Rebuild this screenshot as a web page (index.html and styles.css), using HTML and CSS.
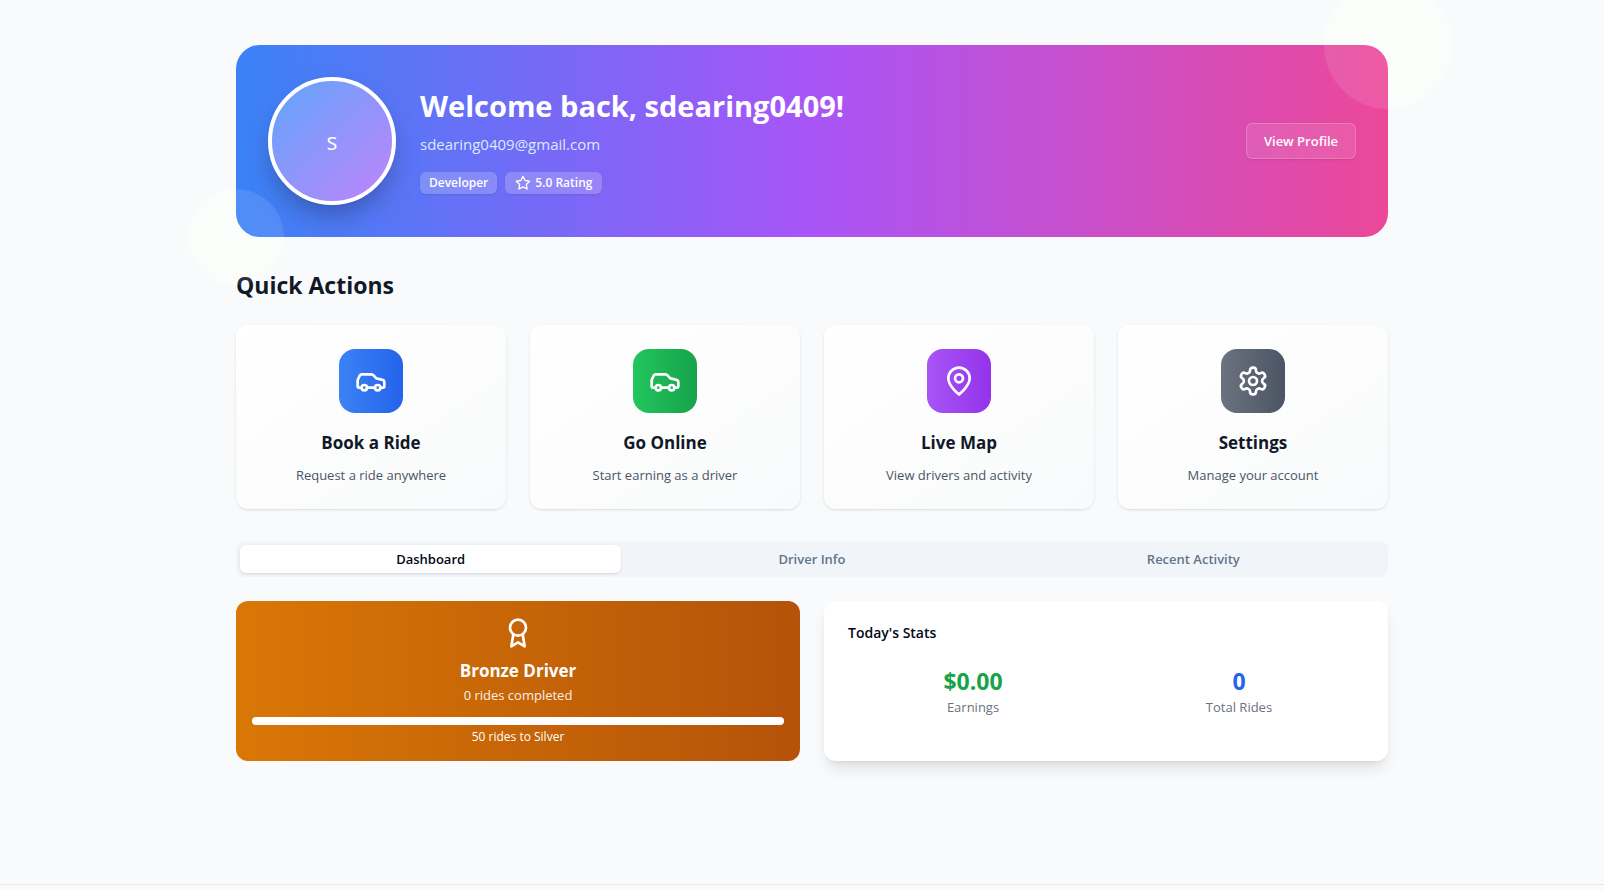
FILE: index.html
```html
<!DOCTYPE html>
<html lang="en">
<head>
<meta charset="utf-8">
<meta name="viewport" content="width=device-width, initial-scale=1">
<title>Dashboard</title>
<link rel="stylesheet" href="styles.css">
</head>
<body>
<div class="shell">
<main class="page">
  <header class="hero">
    <div class="avatar">s</div>
    <div class="hero-text">
      <h1 class="hero-title">Welcome back, sdearing0409!</h1>
      <p class="hero-email">sdearing0409@gmail.com</p>
      <div class="badges">
        <span class="badge">Developer</span>
        <span class="badge badge-rating">
          <svg class="icon star" viewBox="0 0 24 24" aria-hidden="true"><polygon points="12 2 15.09 8.26 22 9.27 17 14.14 18.18 21.02 12 17.77 5.82 21.02 7 14.14 2 9.27 8.91 8.26 12 2"/></svg>
          5.0 Rating
        </span>
      </div>
    </div>
    <button class="profile-button" type="button">View Profile</button>
    <span class="bubble bubble-top"></span>
    <span class="bubble bubble-bottom"></span>
  </header>

  <section class="actions">
    <h2 class="section-title">Quick Actions</h2>
    <div class="action-grid">
      <a class="action" href="#book">
        <span class="tile blue"><svg class="icon" viewBox="0 0 24 24" aria-hidden="true"><path d="M19 17h2c.6 0 1-.4 1-1v-3c0-.9-.7-1.7-1.5-1.9C18.7 10.6 16 10 16 10s-1.3-1.4-2.2-2.3c-.5-.4-1.1-.7-1.8-.7H5c-.6 0-1.1.4-1.4.9l-1.4 2.9A3.7 3.7 0 0 0 2 12v4c0 .6.4 1 1 1h2"/><circle cx="7" cy="17" r="2"/><path d="M9 17h6"/><circle cx="17" cy="17" r="2"/></svg></span>
        <h3 class="action-title">Book a Ride</h3>
        <p class="action-text">Request a ride anywhere</p>
      </a>
      <a class="action" href="#online">
        <span class="tile green"><svg class="icon" viewBox="0 0 24 24" aria-hidden="true"><path d="M19 17h2c.6 0 1-.4 1-1v-3c0-.9-.7-1.7-1.5-1.9C18.7 10.6 16 10 16 10s-1.3-1.4-2.2-2.3c-.5-.4-1.1-.7-1.8-.7H5c-.6 0-1.1.4-1.4.9l-1.4 2.9A3.7 3.7 0 0 0 2 12v4c0 .6.4 1 1 1h2"/><circle cx="7" cy="17" r="2"/><path d="M9 17h6"/><circle cx="17" cy="17" r="2"/></svg></span>
        <h3 class="action-title">Go Online</h3>
        <p class="action-text">Start earning as a driver</p>
      </a>
      <a class="action" href="#map">
        <span class="tile purple"><svg class="icon" viewBox="0 0 24 24" aria-hidden="true"><path d="M20 10c0 6-8 12-8 12s-8-6-8-12a8 8 0 0 1 16 0Z"/><circle cx="12" cy="10" r="3"/></svg></span>
        <h3 class="action-title">Live Map</h3>
        <p class="action-text">View drivers and activity</p>
      </a>
      <a class="action" href="#settings">
        <span class="tile gray"><svg class="icon" viewBox="0 0 24 24" aria-hidden="true"><path d="M12.22 2h-.44a2 2 0 0 0-2 2v.18a2 2 0 0 1-1 1.73l-.43.25a2 2 0 0 1-2 0l-.15-.08a2 2 0 0 0-2.73.73l-.22.38a2 2 0 0 0 .73 2.73l.15.1a2 2 0 0 1 1 1.72v.51a2 2 0 0 1-1 1.74l-.15.09a2 2 0 0 0-.73 2.73l.22.38a2 2 0 0 0 2.73.73l.15-.08a2 2 0 0 1 2 0l.43.25a2 2 0 0 1 1 1.73V20a2 2 0 0 0 2 2h.44a2 2 0 0 0 2-2v-.18a2 2 0 0 1 1-1.73l.43-.25a2 2 0 0 1 2 0l.15.08a2 2 0 0 0 2.73-.73l.22-.39a2 2 0 0 0-.73-2.73l-.15-.08a2 2 0 0 1-1-1.74v-.5a2 2 0 0 1 1-1.74l.15-.09a2 2 0 0 0 .73-2.73l-.22-.38a2 2 0 0 0-2.73-.73l-.15.08a2 2 0 0 1-2 0l-.43-.25a2 2 0 0 1-1-1.73V4a2 2 0 0 0-2-2z"/><circle cx="12" cy="12" r="3"/></svg></span>
        <h3 class="action-title">Settings</h3>
        <p class="action-text">Manage your account</p>
      </a>
    </div>
  </section>

  <div class="tabs" role="tablist">
    <button class="tab active" type="button" role="tab" aria-selected="true">Dashboard</button>
    <button class="tab" type="button" role="tab" aria-selected="false">Driver Info</button>
    <button class="tab" type="button" role="tab" aria-selected="false">Recent Activity</button>
  </div>

  <div class="panels">
    <section class="tier">
      <svg class="icon" viewBox="0 0 24 24" aria-hidden="true"><circle cx="12" cy="8" r="6"/><path d="M15.477 12.89 17 22l-5-3-5 3 1.523-9.11"/></svg>
      <h3 class="tier-title">Bronze Driver</h3>
      <p class="tier-rides">0 rides completed</p>
      <div class="progress" role="progressbar" aria-label="Rides to Silver" aria-valuenow="0" aria-valuemin="0" aria-valuemax="50"></div>
      <p class="tier-next">50 rides to Silver</p>
    </section>
    <section class="stats">
      <h3 class="stats-title">Today's Stats</h3>
      <dl class="stats-grid">
        <div class="stat"><dt class="stat-label">Earnings</dt><dd class="stat-value earned">$0.00</dd></div>
        <div class="stat"><dt class="stat-label">Total Rides</dt><dd class="stat-value rides">0</dd></div>
      </dl>
    </section>
  </div>
</main>
</div>
<footer class="footer"></footer>
</body>
</html>
```
FILE: styles.css
```css
* {
  box-sizing: border-box;
  margin: 0;
}

body {
  display: flex;
  flex-direction: column;
  min-height: 100vh;
  overflow-x: hidden;
  background: #f9fafc;
  color: #020817;
  font-family: "Open Sans", "Noto Sans", sans-serif;
  font-size: 15px;
  line-height: 24px;
}

button {
  font: inherit;
  cursor: pointer;
}

.icon {
  width: 32px;
  height: 32px;
  fill: none;
  stroke: currentColor;
  stroke-width: 2;
  stroke-linecap: round;
  stroke-linejoin: round;
}

.shell {
  flex: 1;
  padding: 45px 32px 32px 52px;
}

.page {
  display: flex;
  flex-direction: column;
  gap: 32px;
  max-width: 1152px;
  margin: 0 auto;
}

/* Welcome banner */
.hero {
  position: relative;
  display: flex;
  align-items: center;
  gap: 24px;
  padding: 32px;
  border-radius: 24px;
  background: linear-gradient(to right, #3b82f6, #a855f7, #ec4899);
  color: #fff;
}

.avatar {
  display: flex;
  flex: none;
  align-items: center;
  justify-content: center;
  width: 128px;
  height: 128px;
  border: 4px solid #fff;
  border-radius: 50%;
  background: linear-gradient(to bottom right, #60a5fa, #c084fc);
  box-shadow: 0 14px 30px -8px rgb(0 0 0 / 0.35);
  font-size: 23px;
  font-weight: 500;
  line-height: 32px;
}

.hero-text {
  flex: 1;
}

.hero-title {
  margin-bottom: 8px;
  font-size: 29px;
  font-weight: 700;
  line-height: 36px;
}

.hero-email {
  margin-bottom: 16px;
  color: #dbeafe;
}

.badges {
  display: flex;
  gap: 8px;
}

.badge {
  display: flex;
  align-items: center;
  gap: 4px;
  padding: 3px 9px;
  border-radius: 6px;
  background: rgb(255 255 255 / 0.2);
  box-shadow: 0 1px 2px rgb(0 0 0 / 0.1);
  font-size: 12px;
  font-weight: 600;
  line-height: 16px;
}

.badge-rating {
  padding: 3px 10px;
}

.star {
  width: 16px;
  height: 16px;
}

.profile-button {
  min-width: 110px;
  height: 36px;
  padding: 0 16px;
  border: 1px solid rgb(255 255 255 / 0.2);
  border-radius: 6px;
  background: rgb(255 255 255 / 0.1);
  box-shadow: 0 1px 2px rgb(0 0 0 / 0.1);
  color: #fff;
  font-size: 13px;
  font-weight: 600;
}

.bubble {
  position: absolute;
  border-radius: 50%;
  background: rgb(255 255 255 / 0.1);
  pointer-events: none;
}

/* Soft disc on the page background, behind the banner */
.bubble::before {
  content: "";
  position: absolute;
  inset: 0;
  z-index: -1;
  border-radius: 50%;
  background: #fbfdfb;
}

.bubble-top {
  top: -64px;
  right: -64px;
  width: 128px;
  height: 128px;
}

.bubble-bottom {
  bottom: -48px;
  left: -48px;
  width: 96px;
  height: 96px;
}

/* Quick actions */
.section-title {
  margin-bottom: 24px;
  color: #111827;
  font-size: 23px;
  font-weight: 700;
  line-height: 32px;
}

.action-grid {
  display: grid;
  grid-template-columns: repeat(4, 1fr);
  gap: 24px;
}

.action {
  display: flex;
  flex-direction: column;
  align-items: center;
  padding: 24px;
  border-radius: 12px;
  background: linear-gradient(to bottom right, #fff, #f9fafb);
  box-shadow: 0 1px 3px rgb(0 0 0 / 0.1), 0 1px 2px -1px rgb(0 0 0 / 0.1);
  color: #111827;
  text-align: center;
  text-decoration: none;
}

.tile {
  display: flex;
  align-items: center;
  justify-content: center;
  width: 64px;
  height: 64px;
  margin-bottom: 16px;
  border-radius: 16px;
  color: #fff;
}

.blue {
  background: linear-gradient(to right, #3b82f6, #2563eb);
}

.green {
  background: linear-gradient(to right, #22c55e, #16a34a);
}

.purple {
  background: linear-gradient(to right, #a855f7, #9333ea);
}

.gray {
  background: linear-gradient(to right, #6b7280, #4b5563);
}

.action-title {
  margin-bottom: 8px;
  font-size: 17px;
  font-weight: 700;
  line-height: 28px;
}

.action-text {
  color: #4b5563;
  font-size: 13px;
  line-height: 20px;
}

/* Tabs */
.tabs {
  display: grid;
  grid-template-columns: repeat(3, 1fr);
  padding: 4px;
  border-radius: 8px;
  background: #f1f5f9;
}

.tab {
  padding: 4px 12px;
  border: 0;
  border-radius: 6px;
  background: none;
  color: #64748b;
  font-size: 13px;
  font-weight: 600;
  line-height: 20px;
}

.active {
  background: #fff;
  box-shadow: 0 1px 3px rgb(0 0 0 / 0.1), 0 1px 2px -1px rgb(0 0 0 / 0.1);
  color: #020817;
}

/* Dashboard panels */
.panels {
  display: grid;
  grid-template-columns: repeat(2, 1fr);
  gap: 24px;
  margin-top: -8px;
}

.tier {
  display: flex;
  flex-direction: column;
  align-items: center;
  padding: 16px;
  border-radius: 12px;
  background: linear-gradient(to right, #d97706, #b45309);
  color: #fff;
}

.tier-title {
  margin-top: 8px;
  font-size: 17px;
  font-weight: 700;
  line-height: 28px;
}

.tier-rides {
  font-size: 13px;
  font-weight: 500;
  line-height: 20px;
  opacity: 0.9;
}

.progress {
  width: 100%;
  height: 8px;
  margin: 12px 0 4px;
  border-radius: 4px;
  background: #fff;
}

.tier-next {
  font-size: 12px;
  line-height: 16px;
}

.stats {
  padding: 24px;
  border-radius: 12px;
  background: #fff;
  box-shadow: 0 10px 15px -3px rgb(0 0 0 / 0.1), 0 4px 6px -4px rgb(0 0 0 / 0.1);
}

.stats-title {
  margin-bottom: 24px;
  font-size: 14px;
  font-weight: 600;
  line-height: 16px;
}

.stats-grid {
  display: grid;
  grid-template-columns: repeat(2, 1fr);
  gap: 16px;
}

.stat {
  display: flex;
  flex-direction: column-reverse;
  text-align: center;
}

.stat-value {
  margin: 0;
  font-size: 23px;
  font-weight: 700;
  line-height: 32px;
}

.earned {
  color: #16a34a;
}

.rides {
  color: #2563eb;
}

.stat-label {
  color: #6b7280;
  font-size: 13px;
  line-height: 20px;
}

.footer {
  height: 6px;
  border-top: 1px solid #e2e8f0;
  background: #fafafa;
}
```
